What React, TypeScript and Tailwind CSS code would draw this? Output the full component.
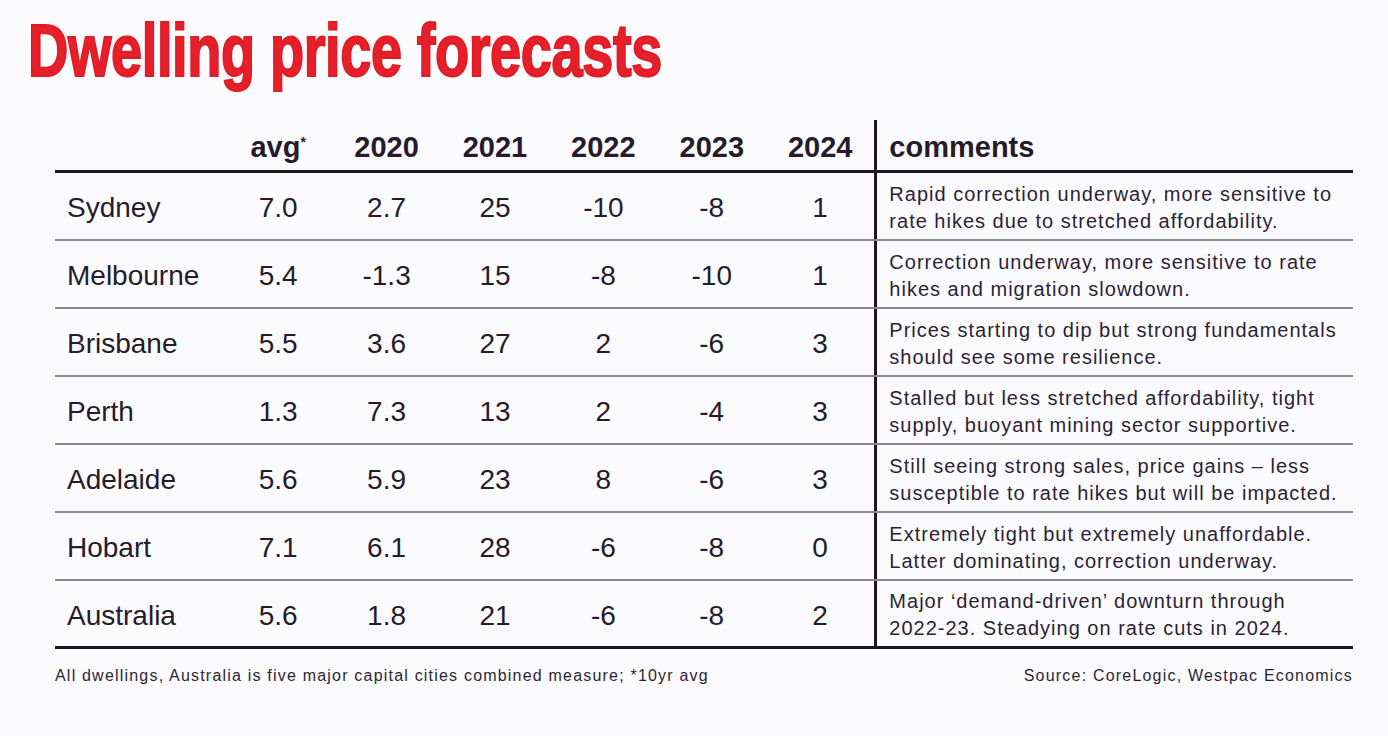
type Row = {
  city: string;
  values: string[];
  comment: [string, string];
};

const YEARS = ["avg*", "2020", "2021", "2022", "2023", "2024"];

const ROWS: Row[] = [
  {
    city: "Sydney",
    values: ["7.0", "2.7", "25", "-10", "-8", "1"],
    comment: ["Rapid correction underway, more sensitive to", "rate hikes due to stretched affordability."],
  },
  {
    city: "Melbourne",
    values: ["5.4", "-1.3", "15", "-8", "-10", "1"],
    comment: ["Correction underway, more sensitive to rate", "hikes and migration slowdown."],
  },
  {
    city: "Brisbane",
    values: ["5.5", "3.6", "27", "2", "-6", "3"],
    comment: ["Prices starting to dip but strong fundamentals", "should see some resilience."],
  },
  {
    city: "Perth",
    values: ["1.3", "7.3", "13", "2", "-4", "3"],
    comment: ["Stalled but less stretched affordability, tight", "supply, buoyant mining sector supportive."],
  },
  {
    city: "Adelaide",
    values: ["5.6", "5.9", "23", "8", "-6", "3"],
    comment: ["Still seeing strong sales, price gains \u2013 less", "susceptible to rate hikes but will be impacted."],
  },
  {
    city: "Hobart",
    values: ["7.1", "6.1", "28", "-6", "-8", "0"],
    comment: ["Extremely tight but extremely unaffordable.", "Latter dominating, correction underway."],
  },
  {
    city: "Australia",
    values: ["5.6", "1.8", "21", "-6", "-8", "2"],
    comment: ["Major \u2018demand-driven\u2019 downturn through", "2022-23. Steadying on rate cuts in 2024."],
  },
];

// shared column template: city, six numeric columns, comments
const COLS = "grid grid-cols-[169px_repeat(6,108.4px)_1fr]";

export default function App() {
  return (
    <div className="w-[1388px] h-[736px] overflow-hidden bg-[#fbfbfd] font-['Liberation_Sans',Arial,sans-serif] text-[#251b2b]">
      <div className="h-[120px] pl-[28px] pt-[13px]">
        {/* condensed heading: Arial-metric bold squeezed horizontally, stroked to look heavier */}
        <h1 className="inline-block origin-left scale-x-[0.745] whitespace-nowrap text-[75px] font-bold leading-none tracking-[-0.5px] text-[#e5202a] [-webkit-text-stroke:2px_#e01c26] [text-shadow:0_0_1px_#b01018]">
          Dwelling price forecasts
        </h1>
      </div>

      <div className="ml-[55px] w-[1298px]">
        <div className={`${COLS} h-[53px] border-b-[3px] border-[#1d1820] text-[29px] font-bold`}>
          <div />
          {YEARS.map((y) => (
            <div key={y} className="flex items-end justify-center pb-[8px] leading-none">
              {y === "avg*" ? (
                <span>
                  avg<span className="relative -top-[10px] text-[14px]">*</span>
                </span>
              ) : (
                y
              )}
            </div>
          ))}
          <div className="flex items-end border-l-[3px] border-[#1d1820] pb-[8px] pl-[12px] leading-none">
            comments
          </div>
        </div>

        {ROWS.map((row, i) => (
          <div
            key={row.city}
            className={`${COLS} h-[68px] pt-[4px] ${
              i === ROWS.length - 1 ? "border-b-[3px] border-[#1d1820]" : "border-b-2 border-[#8d8890]"
            }`}
          >
            <div className="flex items-center pl-[12px] text-[28px]">{row.city}</div>
            {row.values.map((v, j) => (
              <div key={j} className="flex items-center justify-center text-[28px]">
                {v}
              </div>
            ))}
            <div className="-mt-[4px] flex flex-col justify-center border-l-[3px] border-[#1d1820] pl-[12px] pt-[3px] text-[20px] leading-[27px] tracking-[1px] text-[#2d1f36]">
              <span>{row.comment[0]}</span>
              <span>{row.comment[1]}</span>
            </div>
          </div>
        ))}

        <div className="mt-[15px] flex justify-between text-[16px] tracking-[1.2px] text-[#2d1f36]">
          <span>All dwellings, Australia is five major capital cities combined measure; *10yr avg</span>
          <span>Source: CoreLogic, Westpac Economics</span>
        </div>
      </div>
    </div>
  );
}
